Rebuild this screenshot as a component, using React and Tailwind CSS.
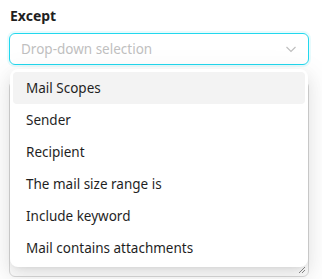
const items = [
  "Mail Scopes",
  "Sender",
  "Recipient",
  "The mail size range is",
  "Include keyword",
  "Mail contains attachments",
];

function Chevron() {
  return (
    <svg width="12" height="12" viewBox="0 0 12 12" fill="none" stroke="#bfbfbf" strokeWidth="1.2">
      <path d="M1.5 4l4.5 4.5L10.5 4" />
    </svg>
  );
}

export default function App() {
  return (
    <div className="w-[322px] h-[279px] bg-white overflow-hidden px-[9px] pt-[6px] text-[13.5px] text-[#1f1f1f]" style={{ fontFamily: "'Noto Sans', sans-serif" }}>
      <div className="font-bold text-[14px] leading-[20px] pl-px">Except</div>
      <div className="relative mt-[7px]">
        <div className="h-[32px] w-[300px] rounded-[6px] border border-[#22d8ee] shadow-[0_0_0_2px_rgba(34,216,238,0.1)] flex items-center justify-between pl-[11px] pr-[11px]">
          <span className="text-[#bfbfbf]">Drop-down selection</span>
          <Chevron />
        </div>
        <div className="mt-[16px] h-[196px] w-[300px] rounded-[6px] border border-[#d9d9d9] relative">
          <svg className="absolute right-[2px] bottom-[2px]" width="8" height="8" viewBox="0 0 8 8" stroke="#8c8c8c" strokeWidth="1">
            <path d="M7 1L1 7M7 4L4 7" />
          </svg>
        </div>
        <div className="absolute left-px top-[36px] w-[298px] rounded-[8px] bg-white p-[3px] shadow-[0_6px_16px_0_rgba(0,0,0,0.08),0_3px_6px_-4px_rgba(0,0,0,0.12),0_9px_28px_8px_rgba(0,0,0,0.05)]">
          {items.map((t, i) => (
            <div key={t} className={`h-[32px] flex items-center px-[13px] rounded-[4px] ${i === 0 ? "bg-[#f3f3f3]" : ""}`}>
              {t}
            </div>
          ))}
        </div>
      </div>
    </div>
  );
}
